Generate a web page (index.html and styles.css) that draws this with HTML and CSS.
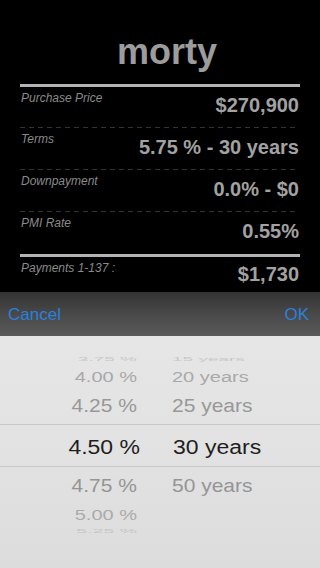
FILE: index.html
```html
<!DOCTYPE html>
<html>
<head>
<meta charset="utf-8">
<link rel="stylesheet" href="styles.css">
</head>
<body>
<div class="screen">
  <div class="summary">
    <h1 class="title">morty</h1>
    <div class="rule"></div>
    <div class="row r1"><span class="label">Purchase Price</span><span class="value">$270,900</span></div>
    <div class="dash"></div>
    <div class="row r2"><span class="label">Terms</span><span class="value">5.75 % - 30 years</span></div>
    <div class="dash"></div>
    <div class="row r3"><span class="label">Downpayment</span><span class="value">0.0% - $0</span></div>
    <div class="dash"></div>
    <div class="row r4"><span class="label">PMI Rate</span><span class="value">0.55%</span></div>
    <div class="rule"></div>
    <div class="row r5"><span class="label">Payments 1-137 :</span><span class="value">$1,730</span></div>
  </div>
  <div class="toolbar">
    <span class="btn">Cancel</span>
    <span class="btn">OK</span>
  </div>
  <div class="picker">
    <div class="prow pa"><span class="pct">3.75 %</span><span class="yrs">15 years</span></div>
    <div class="prow pb"><span class="pct">4.00 %</span><span class="yrs">20 years</span></div>
    <div class="prow pc"><span class="pct">4.25 %</span><span class="yrs">25 years</span></div>
    <div class="prow psel"><span class="pct">4.50 %</span><span class="yrs">30 years</span></div>
    <div class="prow pe"><span class="pct">4.75 %</span><span class="yrs">50 years</span></div>
    <div class="prow pf"><span class="pct">5.00 %</span><span class="yrs"></span></div>
    <div class="prow pg"><span class="pct">5.25 %</span><span class="yrs"></span></div>
  </div>
</div>
</body>
</html>
```
FILE: styles.css
```css
* { box-sizing: border-box; }
html, body {
  margin: 0;
  padding: 0;
  background: #000;
}
.screen {
  width: 320px;
  height: 568px;
  display: flex;
  flex-direction: column;
  font-family: "Liberation Sans", Arial, sans-serif;
  overflow: hidden;
}
.summary {
  height: 292px;
  background: #000;
  padding: 0 21px 0 20px;
  display: flex;
  flex-direction: column;
}
.title {
  margin: 34px 0 0 0;
  padding-left: 15px;
  font-size: 36px;
  line-height: 36px;
  font-weight: bold;
  color: #9c9c9c;
  text-align: center;
}
.rule {
  height: 3px;
  background: #b3b3b3;
  margin-right: -1px;
}
.title + .rule { margin-top: 14px; }
.dash {
  height: 1px;
  margin-right: 4px;
  background: repeating-linear-gradient(to right, #36322e 0 5px, transparent 5px 9px);
}
.row {
  display: flex;
  justify-content: space-between;
  align-items: flex-start;
}
.r1 { height: 40px; }
.r2, .r3 { height: 41px; }
.r4 { height: 42px; }
.r5 { height: 35px; }
.label {
  margin: 5px 0 0 1px;
  font-size: 12px;
  line-height: 12px;
  font-style: italic;
  color: #8a8a8a;
}
.value {
  margin-top: 9px;
  font-size: 20px;
  line-height: 20px;
  font-weight: bold;
  color: #a2a2a2;
}
.r1 .label, .r5 .label { margin-top: 4.5px; }
.r1 .value { margin-top: 8px; }
.r5 .value { margin-top: 7px; }

.toolbar {
  height: 44px;
  padding: 1px 11px 0 8px;
  display: flex;
  justify-content: space-between;
  align-items: center;
  background: linear-gradient(#333333, #494949 50%, #5a5a5a);
}
.btn {
  font-size: 17px;
  line-height: 43px;
  color: #2a80dc;
}
.picker {
  flex: 1;
  padding-top: 16px;
  background: linear-gradient(#e6e6e6, #e2e2e2 50%, #dcdcdc);
  display: flex;
  flex-direction: column;
}
.prow {
  display: flex;
  align-items: center;
  column-gap: 35px;
  flex-shrink: 0;
}
.prow span {
  display: block;
  line-height: 1;
  white-space: nowrap;
}
.pct {
  width: 137px;
  text-align: right;
}
.pa { height: 14px; font-size: 19px; color: #c8c8c8; }
.pa span { transform: scaleY(0.3); }
.pb { height: 21px; font-size: 20px; color: #a9a9a9; }
.pb span { transform: scaleY(0.69); }
.pc { height: 37px; font-size: 21px; color: #989898; }
.pc span { transform: scaleY(0.86); }
.psel {
  height: 43px;
  padding-top: 3px;
  font-size: 23px;
  color: #1e1e1e;
  border-top: 1px solid #c9c9c9;
  border-bottom: 1px solid #c9c9c9;
  column-gap: 33px;
}
.psel .pct { width: 140px; }
.psel span { transform: scaleY(0.85); }
.pe { height: 36px; font-size: 21px; color: #959595; }
.pe span { transform: scaleY(0.89); }
.pf { height: 24px; font-size: 20px; color: #ababab; }
.pf span { transform: scaleY(0.74); }
.pg { height: 8px; font-size: 19.5px; color: #c6c6c6; }
.pg span { transform: scaleY(0.28); }
```
